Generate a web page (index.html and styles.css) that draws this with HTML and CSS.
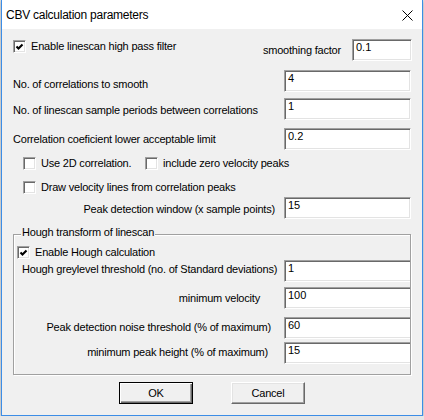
FILE: index.html
```html
<!DOCTYPE html>
<html lang="en">

<head>
    <meta charset="UTF-8">
    <meta name="viewport" content="width=device-width, initial-scale=1.0">
    <title>CBV calculation parameters</title>
    <link rel="stylesheet" href="styles.css">
</head>

<body>
    <div class="window">
        <div class="titlebar">
            <span class="title">CBV calculation parameters</span>
            <svg class="close" width="11" height="11" viewBox="0 0 11 11">
                <path d="M0.5 0.5 L10.5 10.5 M10.5 0.5 L0.5 10.5" stroke="#000" stroke-width="1" fill="none" />
            </svg>
        </div>

        <div class="client">
            <div class="row first">
                <label class="check top">
                    <span class="box"><svg width="11" height="11" viewBox="0 0 11 11"><polyline points="2.5,5.5 4.5,7.5 8.5,3.5" stroke="#000" stroke-width="2.1" fill="none" /></svg></span>
                    Enable linescan high pass filter
                </label>
                <span class="label right">smoothing factor</span>
                <div class="input small">0.1</div>
            </div>

            <div class="row gap-9">
                <span class="label down3">No. of correlations to smooth</span>
                <div class="input">4</div>
            </div>
            <div class="row gap-6">
                <span class="label down1">No. of linescan sample periods between correlations</span>
                <div class="input">1</div>
            </div>
            <div class="row gap-8">
                <span class="label">Correlation coeficient lower acceptable limit</span>
                <div class="input">0.2</div>
            </div>

            <div class="checks gap-7">
                <label class="check wide">
                    <span class="box"></span>
                    Use 2D correlation.
                </label>
                <label class="check">
                    <span class="box"></span>
                    include zero velocity peaks
                </label>
            </div>
            <div class="checks gap-11">
                <label class="check">
                    <span class="box"></span>
                    Draw velocity lines from correlation peaks
                </label>
            </div>

            <div class="row gap-3">
                <span class="label down1 right pr-9">Peak detection window (x sample points)</span>
                <div class="input">15</div>
            </div>

            <div class="group">
                <span class="legend">Hough transform of linescan</span>
                <label class="check">
                    <span class="box"><svg width="11" height="11" viewBox="0 0 11 11"><polyline points="2.5,5.5 4.5,7.5 8.5,3.5" stroke="#000" stroke-width="2.1" fill="none" /></svg></span>
                    Enable Hough calculation
                </label>
                <div class="row gap-1">
                    <span class="label up2 indent">Hough greylevel threshold (no. of Standard deviations)</span>
                    <div class="input cut">1</div>
                </div>
                <div class="row gap-5">
                    <span class="label right pr-24">minimum velocity</span>
                    <div class="input cut">100</div>
                </div>
                <div class="row gap-8">
                    <span class="label up1 right pr-13">Peak detection noise threshold (% of maximum)</span>
                    <div class="input cut">60</div>
                </div>
                <div class="row gap-3">
                    <span class="label up1 right pr-16">minimum peak height (% of maximum)</span>
                    <div class="input cut">15</div>
                </div>
            </div>

            <div class="buttons">
                <button class="btn default">OK</button>
                <button class="btn">Cancel</button>
            </div>
        </div>
    </div>
</body>

</html>
```

FILE: styles.css
```css
body {
    margin: 0;
    background: #e6e6e6;
    font-family: "Liberation Sans", Arial, sans-serif;
    font-size: 11px;
    letter-spacing: -0.2px;
    color: #000;
}

.window {
    margin-left: 1px;
    width: 422px;
    height: 416px;
    box-sizing: border-box;
    border: 1px solid #3c8de6;
    border-top: none;
    background: #f0f0f0;
    box-shadow: 0 1px 4px rgba(0, 0, 0, 0.3);
    display: flex;
    flex-direction: column;
}

.titlebar {
    height: 29px;
    flex: none;
    background: #fff;
    display: flex;
    align-items: center;
    justify-content: space-between;
    padding: 0 9px 0 4px;
}

.title {
    font-size: 12px;
    letter-spacing: -0.25px;
}

.close {
    margin-top: 1px;
}

.client {
    flex: 1;
    padding: 10px 11px 0 11px;
}

/* one dialog line: caption on the left, edit box on the right */
.row {
    display: flex;
    align-items: flex-start;
    height: 22px;
}

.label {
    flex: 1;
    line-height: 13px;
    padding-top: 5px;
    white-space: nowrap;
}

.label.right {
    text-align: right;
}

.down1 { padding-top: 6px; }
.down3 { padding-top: 8px; }
.up1 { padding-top: 4px; }
.up2 { padding-top: 3px; }

.pr-9 { padding-right: 9px; }
.pr-13 { padding-right: 13px; }
.pr-16 { padding-right: 16px; }
.pr-24 { padding-right: 24px; }

.indent {
    padding-left: 5px;
}

.gap-1 { margin-top: 1px; }
.gap-3 { margin-top: 3px; }
.gap-5 { margin-top: 5px; }
.gap-6 { margin-top: 6px; }
.gap-7 { margin-top: 7px; }
.gap-8 { margin-top: 8px; }
.gap-9 { margin-top: 9px; }
.gap-11 { margin-top: 11px; }

.input {
    width: 127px;
    height: 22px;
    box-sizing: border-box;
    flex: none;
    background: #fff;
    border: 1px solid;
    border-color: #a0a0a0 #fff #fff #a0a0a0;
    box-shadow: inset 1px 1px #696969, inset -1px -1px #e3e3e3;
    padding: 1px 3px 0;
    line-height: 13px;
    letter-spacing: 0;
}

.input.small {
    width: 60px;
    margin-left: 11px;
    margin-right: -1px;
}

/* edit boxes inside the group run under its right edge */
.input.cut {
    width: 126px;
    border-right: none;
    box-shadow: inset 1px 1px #696969, inset 0 -1px #e3e3e3;
}

.check {
    display: flex;
    align-items: center;
    height: 13px;
    line-height: 13px;
    white-space: nowrap;
}

.check.top {
    flex: 1;
    margin-top: 1px;
}

.check.wide {
    width: 122px;
}

.box {
    width: 13px;
    height: 13px;
    box-sizing: border-box;
    flex: none;
    margin-right: 5px;
    background: #fff;
    border: 1px solid;
    border-color: #a0a0a0 #fff #fff #a0a0a0;
    box-shadow: inset 1px 1px #696969, inset -1px -1px #e3e3e3;
}

.box svg {
    display: block;
}

.checks {
    display: flex;
    padding-left: 10px;
}

.group {
    position: relative;
    margin-top: 15px;
    height: 141px;
    box-sizing: border-box;
    border: 1px solid #a0a0a0;
    box-shadow: inset 1px 1px #fff, 1px 1px #fff;
    padding: 11px 0 0 3px;
}

.legend {
    position: absolute;
    top: -9px;
    left: 7px;
    padding: 0 1px;
    line-height: 13px;
    background: #f0f0f0;
}

.buttons {
    display: flex;
    justify-content: center;
    gap: 38px;
    margin-top: 7px;
}

.btn {
    width: 74px;
    height: 22px;
    padding: 0;
    font: inherit;
    letter-spacing: inherit;
    color: #000;
    background: #f0f0f0;
    border: 1px solid;
    border-color: #fff #696969 #696969 #fff;
    box-shadow: inset -1px -1px #a0a0a0, inset 1px 1px #e3e3e3;
}

.btn.default {
    border-color: #000;
    box-shadow: inset 1px 1px #fff, inset -1px -1px #696969, inset -2px -2px #a0a0a0;
}
```
